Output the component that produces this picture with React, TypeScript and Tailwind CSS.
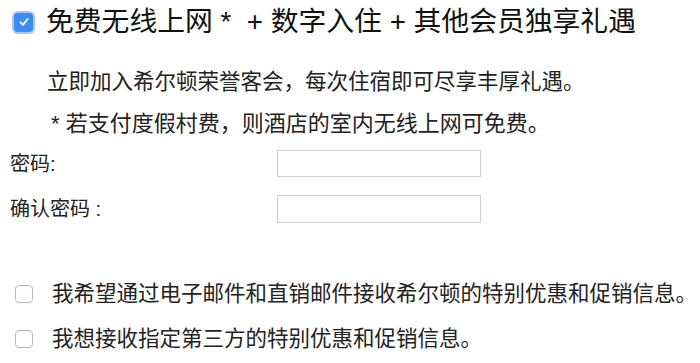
import React from "react";

const font = "font-['Liberation_Sans','Noto_Sans_CJK_SC',sans-serif]";

function CheckedBox() {
  return (
    <span className="flex h-[23px] w-[23px] shrink-0 items-center justify-center rounded-[6px] bg-[#a7c8f4] p-[2px]">
      <span className="flex h-full w-full items-center justify-center rounded-[4px] bg-[#3b8df5]">
        <svg width="12" height="12" viewBox="0 0 12 12" fill="none">
          <path
            d="M2.5 6.3 L5 8.8 L9.6 3"
            stroke="white"
            strokeWidth="1.9"
            strokeLinecap="round"
            strokeLinejoin="round"
          />
        </svg>
      </span>
    </span>
  );
}

function EmptyBox() {
  return (
    <span className="block h-[18px] w-[18px] shrink-0 rounded-[4px] border border-[#b9b9b9] bg-white shadow-[inset_0_1px_1px_rgba(0,0,0,0.05)]" />
  );
}

export default function App() {
  return (
    <main className={`h-[363px] w-[700px] overflow-hidden bg-white ${font}`}>
      <div className="flex h-[44px] items-center gap-[11px] pl-[12px]">
        <CheckedBox />
        <span className="whitespace-pre text-[27.8px] leading-[44px] text-[#111]">
          {"免费无线上网 *  + 数字入住 + 其他会员独享礼遇"}
        </span>
      </div>

      <p className="mt-[24px] h-[29px] pl-[47px] text-[21.5px] leading-[29px] text-[#222]">
        立即加入希尔顿荣誉客会，每次住宿即可尽享丰厚礼遇。
      </p>
      <p className="mt-[12px] h-[29px] pl-[51px] text-[22px] leading-[29px] text-[#222]">
        * 若支付度假村费，则酒店的室内无线上网可免费。
      </p>

      <div className="mt-[12px] flex h-[27px] items-center">
        <label className="w-[277px] pl-[10px] text-[20px] text-[#222]">密码:</label>
        <input
          type="password"
          className="h-[27px] w-[204px] border border-[#cfcfcf] bg-white outline-none"
        />
      </div>
      <div className="mt-[18px] flex h-[28px] items-center">
        <label className="w-[277px] whitespace-pre pl-[10px] text-[20px] text-[#222]">
          {"确认密码 :"}
        </label>
        <input
          type="password"
          className="h-[28px] w-[204px] border border-[#cfcfcf] bg-white outline-none"
        />
      </div>

      <div className="mt-[56px] flex h-[30px] items-center gap-[19px] pl-[15px]">
        <EmptyBox />
        <span className="whitespace-nowrap text-[21.5px] text-[#222]">
          我希望通过电子邮件和直销邮件接收希尔顿的特别优惠和促销信息。
        </span>
      </div>
      <div className="mt-[15px] flex h-[30px] items-center gap-[19px] pl-[15px]">
        <EmptyBox />
        <span className="whitespace-nowrap text-[21.5px] text-[#222]">
          我想接收指定第三方的特别优惠和促销信息。
        </span>
      </div>
    </main>
  );
}
